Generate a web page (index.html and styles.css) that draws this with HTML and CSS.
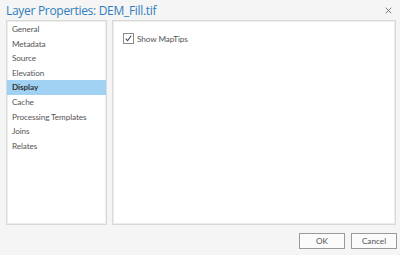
FILE: index.html
```html
<!DOCTYPE html>
<html lang="en">
<head>
    <meta charset="UTF-8">
    <title>Layer Properties</title>
    <link rel="stylesheet" href="styles.css">
</head>
<body>
    <div class="dialog">
        <div class="title-bar">
            <h1>Layer Properties: DEM_Fill.tif</h1>
            <span class="close">
                <svg viewBox="0 0 10 10"><path d="M1 1L9 9M9 1L1 9"></path></svg>
            </span>
        </div>
        <div class="content">
            <ul class="nav">
                <li>General</li>
                <li>Metadata</li>
                <li>Source</li>
                <li>Elevation</li>
                <li class="active">Display</li>
                <li>Cache</li>
                <li>Processing Templates</li>
                <li>Joins</li>
                <li>Relates</li>
            </ul>
            <div class="page">
                <label class="check">
                    <span class="box">
                        <svg viewBox="0 0 10 10"><path d="M2 5.2L4 7.5L8 2"></path></svg>
                    </span>
                    Show MapTips
                </label>
            </div>
        </div>
        <div class="footer">
            <button>OK</button>
            <button>Cancel</button>
        </div>
    </div>
</body>
</html>
```
FILE: styles.css
```css
body {
    margin: 0;
    font-family: Lato, 'Open Sans', sans-serif;
    background-color: #f4f5f4;
}

.dialog {
    width: 400px;
    height: 255px;
    display: flex;
    flex-direction: column;
}

.title-bar {
    height: 20px;
    display: flex;
    align-items: center;
    justify-content: space-between;
    padding: 0 6px;
}

h1 {
    margin: 0;
    font-family: 'Open Sans', sans-serif;
    font-size: 12px;
    font-weight: normal;
    color: #2f7dbf;
    letter-spacing: -0.3px;
}

.close svg {
    display: block;
    width: 7px;
    height: 7px;
    stroke: #777;
    stroke-width: 1.4;
    margin-right: 2px;
}

.content {
    height: 205px;
    display: flex;
    gap: 5px;
    padding: 0 4px 0 6px;
}

.nav {
    width: 99px;
    margin: 0;
    padding: 1px 0;
    list-style: none;
    background: #fff;
    border: 1px solid #d8dad8;
    box-shadow: inset 0 0 0 1px #eceeec;
}

.nav li {
    height: 14.6px;
    line-height: 14.6px;
    padding-left: 5px;
    font-size: 8.2px;
    color: #555;
    letter-spacing: -0.1px;
}

.nav li.active {
    background: #a2d2f3;
    font-weight: bold;
    color: #333;
}

.page {
    flex: 1;
    background: #fff;
    border: 1px solid #d8dad8;
    box-shadow: inset 0 0 0 1px #eceeec;
    padding: 12px 10px;
}

.check {
    display: flex;
    align-items: center;
    gap: 3px;
    font-size: 8.2px;
    color: #555;
    letter-spacing: -0.1px;
}

.box {
    width: 9px;
    height: 9px;
    border: 1px solid #8a8a8a;
    background: #fff;
}

.box svg {
    display: block;
    width: 9px;
    height: 9px;
    fill: none;
    stroke: #444;
    stroke-width: 1.2;
}

.footer {
    flex: 1;
    display: flex;
    justify-content: flex-end;
    align-items: center;
    gap: 6px;
    padding-right: 3px;
    padding-top: 2px;
}

button {
    width: 46px;
    height: 16px;
    padding: 0;
    font-family: inherit;
    font-size: 8.2px;
    color: #555;
    background: #fbfbfb;
    border: 1px solid #9a9a9a;
    border-radius: 0;
}
```
